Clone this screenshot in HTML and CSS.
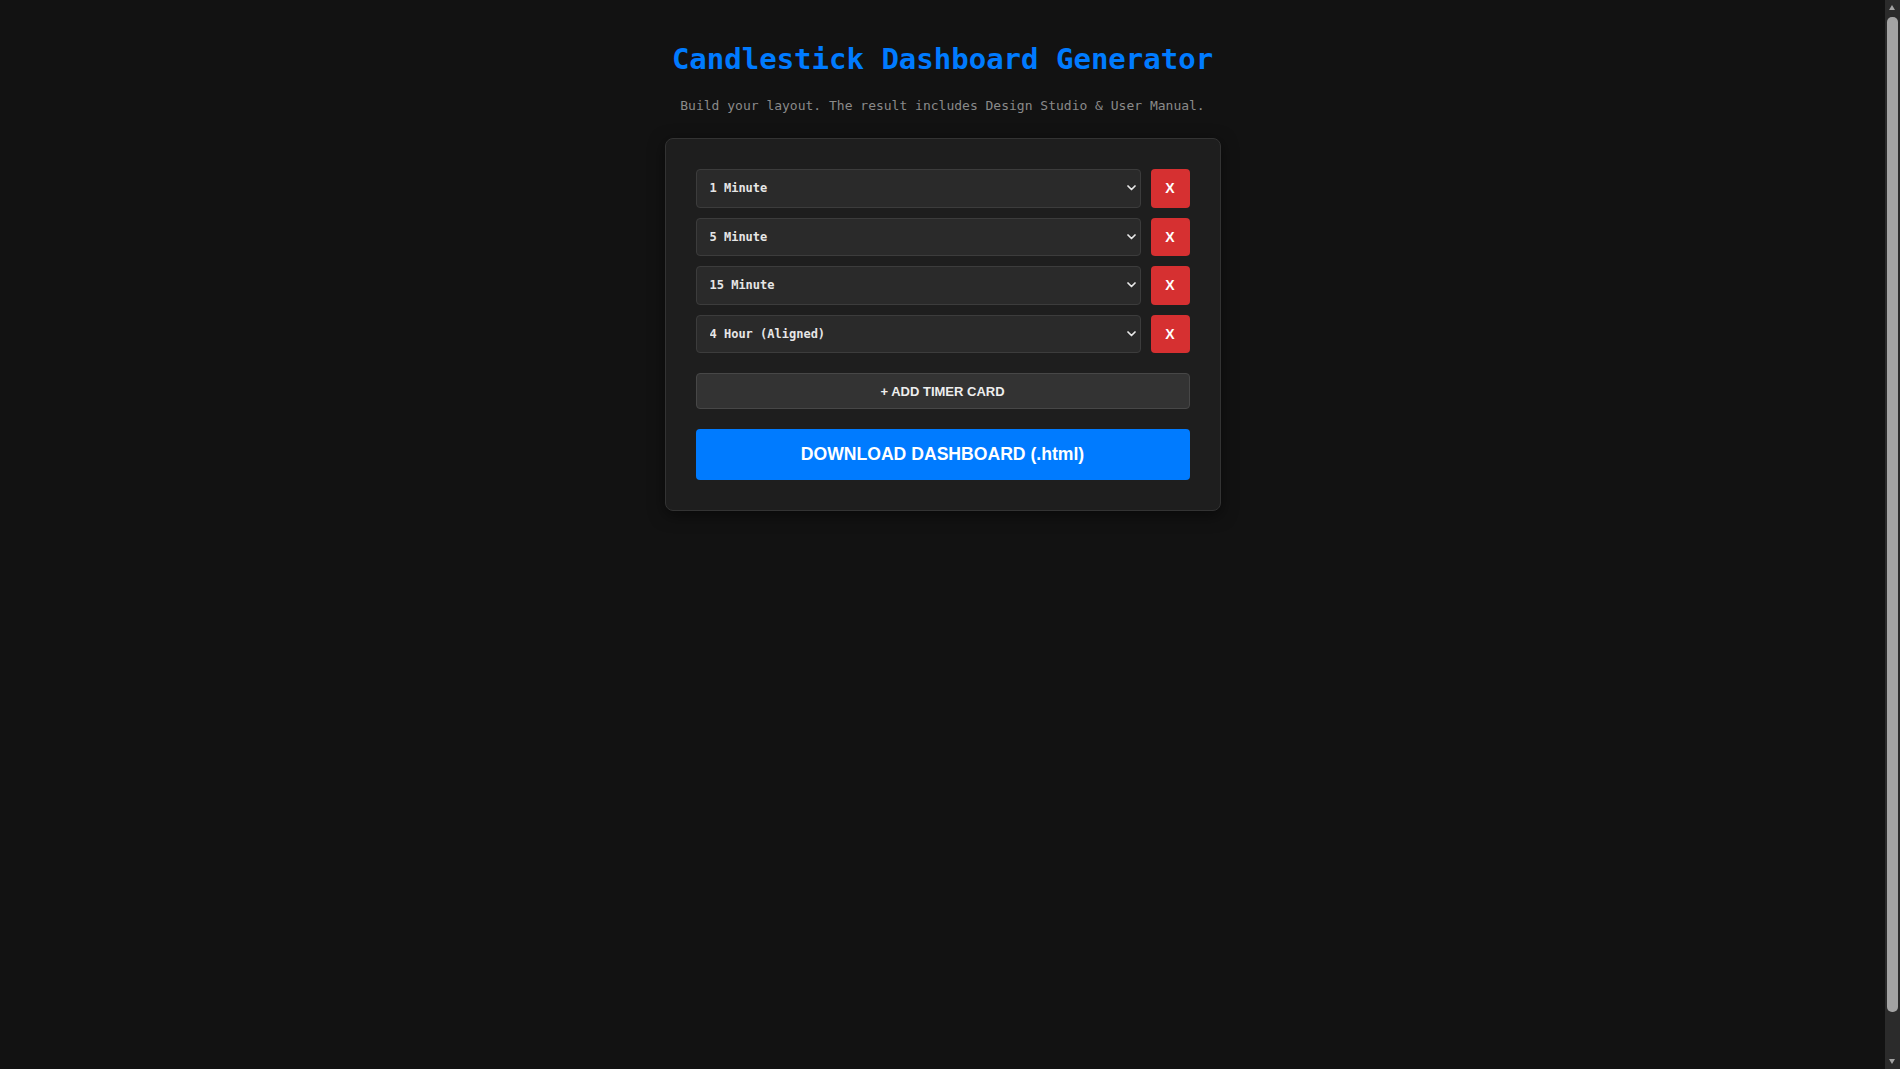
FILE: index.html
```html
<!DOCTYPE html>
<html lang="en">
<head>
<meta charset="utf-8">
<title>Candlestick Dashboard Generator</title>
<link rel="stylesheet" href="styles.css">
</head>
<body>
<div class="page">
  <h1 class="title">Candlestick Dashboard Generator</h1>
  <p class="subtitle">Build your layout. The result includes Design Studio &amp; User Manual.</p>
  <div class="card">
    <div class="rows">
      <div class="row">
        <div class="select-wrap">
          <select class="tf-select"><option>1 Minute</option></select>
          <svg class="chev" width="9" height="6" viewBox="0 0 9 6"><polyline points="1,1 4.5,4.5 8,1" fill="none" stroke="#e8e8e8" stroke-width="1.7" stroke-linecap="round" stroke-linejoin="round"/></svg>
        </div>
        <button class="remove-btn">X</button>
      </div>
      <div class="row">
        <div class="select-wrap">
          <select class="tf-select"><option>5 Minute</option></select>
          <svg class="chev" width="9" height="6" viewBox="0 0 9 6"><polyline points="1,1 4.5,4.5 8,1" fill="none" stroke="#e8e8e8" stroke-width="1.7" stroke-linecap="round" stroke-linejoin="round"/></svg>
        </div>
        <button class="remove-btn">X</button>
      </div>
      <div class="row">
        <div class="select-wrap">
          <select class="tf-select"><option>15 Minute</option></select>
          <svg class="chev" width="9" height="6" viewBox="0 0 9 6"><polyline points="1,1 4.5,4.5 8,1" fill="none" stroke="#e8e8e8" stroke-width="1.7" stroke-linecap="round" stroke-linejoin="round"/></svg>
        </div>
        <button class="remove-btn">X</button>
      </div>
      <div class="row">
        <div class="select-wrap">
          <select class="tf-select"><option>4 Hour (Aligned)</option></select>
          <svg class="chev" width="9" height="6" viewBox="0 0 9 6"><polyline points="1,1 4.5,4.5 8,1" fill="none" stroke="#e8e8e8" stroke-width="1.7" stroke-linecap="round" stroke-linejoin="round"/></svg>
        </div>
        <button class="remove-btn">X</button>
      </div>
    </div>
    <button class="add-btn">+ ADD TIMER CARD</button>
    <button class="download-btn">DOWNLOAD DASHBOARD (.html)</button>
  </div>
</div>
<div class="scrollbar" aria-hidden="true">
  <span class="sb-arrow sb-up"></span>
  <span class="sb-thumb"></span>
  <span class="sb-arrow sb-down"></span>
</div>
</body>
</html>
```
FILE: styles.css
```css
html {
  background: #121212;
}
body {
  margin: 0 15px 0 0;
  background: #121212;
  color: #e0e0e0;
  font-family: "DejaVu Sans Mono", monospace;
}
.page {
  min-height: 100vh;
  padding: 25px 20px;
  display: flex;
  flex-direction: column;
  align-items: center;
}
.title {
  margin: 16px 0 0;
  font-size: 29px;
  line-height: 36px;
  font-weight: bold;
  color: #007bff;
}
.subtitle {
  margin: 20px 0 0;
  font-size: 13px;
  line-height: 18px;
  color: #8a8a8a;
}
.card {
  margin-top: 23px;
  width: 494px;
  padding: 30px;
  background: #1e1e1e;
  border: 1px solid #333;
  border-radius: 8px;
  box-shadow: 0 4px 16px rgba(0, 0, 0, 0.5);
}
.rows {
  display: flex;
  flex-direction: column;
  gap: 10px;
}
.row {
  display: flex;
  gap: 10px;
  height: 38.5px;
}
.select-wrap {
  position: relative;
  flex: 1;
  display: flex;
}
.tf-select {
  appearance: none;
  -webkit-appearance: none;
  width: 100%;
  margin: 0;
  padding: 0 13px;
  background: #2a2a2a;
  border: 1px solid #3c3c3c;
  border-radius: 4px;
  color: #e6e6e6;
  font-family: "DejaVu Sans Mono", monospace;
  font-size: 12px;
  font-weight: bold;
  outline: none;
}
.chev {
  position: absolute;
  right: 5px;
  top: 50%;
  transform: translateY(-50%);
}
.remove-btn {
  width: 39px;
  margin: 0;
  padding: 0;
  background: #d63031;
  border: none;
  border-radius: 4px;
  color: #fff;
  font-family: "Liberation Sans", Arial, sans-serif;
  font-size: 14px;
  font-weight: bold;
}
.add-btn {
  display: block;
  width: 100%;
  margin: 20px 0 0;
  height: 36px;
  padding: 0;
  background: #333;
  border: 1px solid #474747;
  border-radius: 4px;
  color: #eee;
  font-family: "Liberation Sans", Arial, sans-serif;
  font-size: 13px;
  font-weight: bold;
}
.download-btn {
  display: block;
  width: 100%;
  margin: 20px 0 0;
  height: 51px;
  padding: 0;
  background: #007bff;
  border: none;
  border-radius: 4px;
  color: #fff;
  font-family: "Liberation Sans", Arial, sans-serif;
  font-size: 17.6px;
  font-weight: bold;
}
.scrollbar {
  position: fixed;
  top: 0;
  right: 0;
  width: 15px;
  height: 100vh;
  background: #2b2b2b;
}
.sb-thumb {
  position: absolute;
  left: 2px;
  right: 2px;
  top: 17px;
  bottom: 57px;
  background: #a3a3a3;
  border-radius: 5px;
}
.sb-arrow {
  position: absolute;
  left: 4px;
  width: 0;
  height: 0;
  border-left: 3.5px solid transparent;
  border-right: 3.5px solid transparent;
}
.sb-up {
  top: 5px;
  border-bottom: 5px solid #a3a3a3;
}
.sb-down {
  bottom: 5px;
  border-top: 5px solid #a3a3a3;
}
```
